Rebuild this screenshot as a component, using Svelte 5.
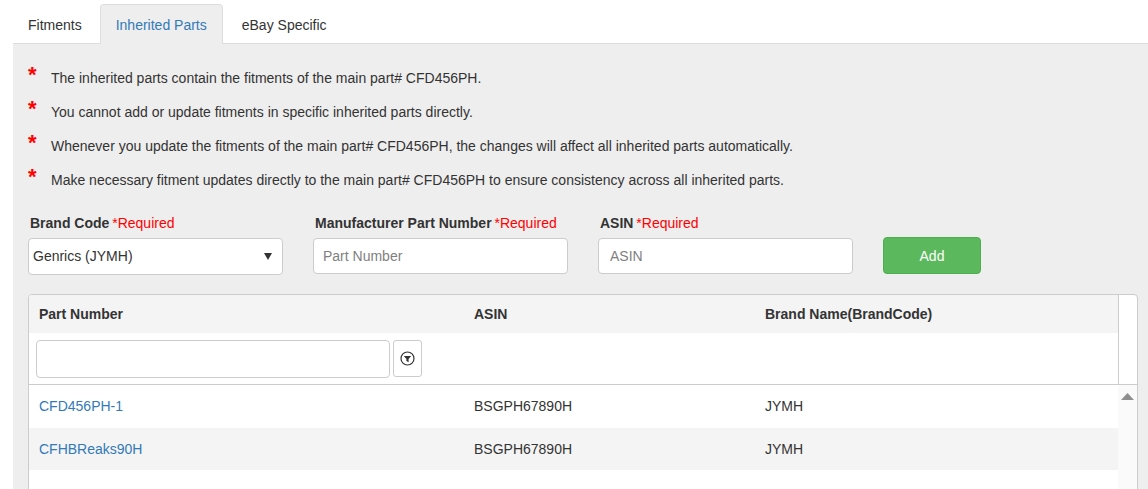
<script>
  const mainPart = 'CFD456PH';
  const notes = [
    `The inherited parts contain the fitments of the main part# ${mainPart}.`,
    'You cannot add or update fitments in specific inherited parts directly.',
    `Whenever you update the fitments of the main part# ${mainPart}, the changes will affect all inherited parts automatically.`,
    `Make necessary fitment updates directly to the main part# ${mainPart} to ensure consistency across all inherited parts.`
  ];
  const rows = [
    { part: 'CFD456PH-1', asin: 'BSGPH67890H', brand: 'JYMH' },
    { part: 'CFHBReaks90H', asin: 'BSGPH67890H', brand: 'JYMH' }
  ];
</script>

<div class="page">
  <ul class="tabs">
    <li>Fitments</li>
    <li class="active">Inherited Parts</li>
    <li>eBay Specific</li>
  </ul>

  <div class="panel">
    <ul class="notes">
      {#each notes as note}
        <li><span class="star">*</span><span>{note}</span></li>
      {/each}
    </ul>

    <div class="form">
      <div class="field">
        <div class="label"><b>Brand Code</b> <i>*Required</i></div>
        <div class="select">
          <span>Genrics (JYMH)</span>
          <svg width="8" height="7" viewBox="0 0 8 7"><path d="M0 0h8L4 7z" fill="#333" /></svg>
        </div>
      </div>
      <div class="field">
        <div class="label"><b>Manufacturer Part Number</b> <i>*Required</i></div>
        <input class="input" placeholder="Part Number" />
      </div>
      <div class="field">
        <div class="label"><b>ASIN</b> <i>*Required</i></div>
        <input class="input asin" placeholder="ASIN" />
      </div>
      <button class="add">Add</button>
    </div>

    <div class="table">
      <div class="head">
        <div class="head-main">
          <div class="cols titles">
            <div>Part Number</div>
            <div>ASIN</div>
            <div>Brand Name(BrandCode)</div>
          </div>
          <div class="filter">
            <input class="filter-input" />
            <button class="filter-btn" aria-label="Filter">
              <svg width="15" height="15" viewBox="0 0 15 15">
                <circle cx="7.5" cy="7.5" r="6.5" fill="none" stroke="#333" stroke-width="1.2" />
                <path d="M3.8 5h7.4L8.6 8v3.2L6.4 10V8z" fill="#333" />
              </svg>
            </button>
          </div>
        </div>
        <div class="head-gutter"></div>
      </div>
      <div class="body">
        <div class="rows">
          {#each rows as row}
            <div class="cols row">
              <div><a href="#top">{row.part}</a></div>
              <div>{row.asin}</div>
              <div>{row.brand}</div>
            </div>
          {/each}
        </div>
        <div class="scrollbar">
          <svg width="13" height="7" viewBox="0 0 13 7"><path d="M6.5 0L13 7H0z" fill="#8e8e8e" /></svg>
        </div>
      </div>
    </div>
  </div>
</div>

<style>
  :global(body) {
    margin: 0;
    background: #fff;
  }

  .page {
    height: 489px;
    overflow: hidden;
    padding-left: 13px;
    display: flex;
    flex-direction: column;
    font-family: "Liberation Sans", Arial, sans-serif;
    font-size: 14px;
    color: #333;
  }

  .tabs {
    list-style: none;
    margin: 0;
    padding: 4px 0 0 0;
    height: 39px;
    display: flex;
    flex-shrink: 0;
    border-bottom: 1px solid #ddd;
  }

  .tabs li {
    padding: 0 15px;
    margin-right: 2px;
    line-height: 41px;
    border: 1px solid transparent;
    border-bottom: 0;
    border-radius: 4px 4px 0 0;
    box-sizing: border-box;
    height: 40px;
  }

  .tabs li:first-child {
    margin-left: -1px;
  }

  .tabs li:last-child {
    margin-left: 1px;
  }

  .tabs li.active {
    background: #eee;
    border-color: #ddd;
    color: #337ab7;
  }

  .panel {
    flex: 1;
    background: #eee;
    padding: 0 10px 0 15px;
  }

  .notes {
    list-style: none;
    margin: 0;
    padding: 17px 0 0 0;
  }

  .notes li {
    height: 34px;
    display: flex;
    align-items: center;
  }

  .star {
    width: 23px;
    color: #f00;
    font-size: 22px;
    font-weight: bold;
    line-height: 20px;
    height: 20px;
    margin-top: -6px;
  }

  .form {
    margin-top: 16px;
    display: flex;
    align-items: flex-end;
  }

  .field {
    width: 255px;
    margin-right: 30px;
  }

  .label {
    padding-left: 2px;
    height: 25px;
    line-height: 20px;
    white-space: nowrap;
  }

  .label i {
    font-style: normal;
    color: #f00;
    margin-left: -1px;
  }

  .select,
  .input {
    box-sizing: border-box;
    width: 255px;
    height: 36px;
    background: #fff;
    border: 1px solid #ccc;
    border-radius: 4px;
    font: inherit;
    color: #333;
  }

  .select {
    height: 37px;
    padding: 0 10px 2px 4px;
    display: flex;
    align-items: center;
    justify-content: space-between;
  }

  .select svg {
    margin-top: 2px;
  }

  .input {
    display: block;
    margin-bottom: 1px;
    padding: 0 9px;
    outline: none;
  }

  .input.asin {
    padding-left: 11px;
  }

  .input::placeholder {
    color: #7f7f7f;
    opacity: 1;
  }

  .add {
    width: 98px;
    height: 37px;
    margin-bottom: 1px;
    padding: 0;
    background: #5cb85c;
    border: 1px solid #4cae4c;
    border-radius: 4px;
    color: #fff;
    font: inherit;
  }

  .table {
    margin-top: 19px;
    border: 1px solid #ccc;
    border-radius: 4px 4px 0 0;
    background: #fff;
    height: 300px;
    width: 1110px;
    box-sizing: border-box;
    overflow: hidden;
  }

  .head {
    display: flex;
    height: 89px;
    border-bottom: 1px solid #ccc;
  }

  .head-main {
    width: 1089px;
    border-right: 1px solid #ccc;
  }

  .head-gutter {
    flex: 1;
  }

  .cols {
    display: grid;
    grid-template-columns: 435px 291px 1fr;
    padding-left: 10px;
    align-items: center;
  }

  .titles {
    height: 38px;
    background: #f4f4f4;
    font-weight: bold;
  }

  .filter {
    display: flex;
    align-items: flex-start;
    gap: 3px;
    padding: 7px 0 0 7px;
  }

  .filter-input {
    box-sizing: border-box;
    width: 354px;
    height: 38px;
    background: #fff;
    border: 1px solid #ccc;
    border-radius: 4px;
    outline: none;
  }

  .filter-btn {
    box-sizing: border-box;
    width: 29px;
    height: 37px;
    padding: 0;
    background: #fff;
    border: 1px solid #ccc;
    border-radius: 3px;
    display: flex;
    align-items: center;
    justify-content: center;
  }

  .body {
    display: flex;
    height: 210px;
  }

  .rows {
    width: 1089px;
  }

  .row {
    box-sizing: border-box;
    height: 43px;
    padding-bottom: 2px;
  }

  .row:nth-child(even) {
    height: 42px;
    padding-bottom: 0;
    background: #f4f4f4;
  }

  .row a {
    color: #337ab7;
    text-decoration: none;
  }

  .scrollbar {
    flex: 1;
    background: #fafafa;
    padding: 8px 0 0 3px;
  }

  .scrollbar svg {
    display: block;
  }
</style>
